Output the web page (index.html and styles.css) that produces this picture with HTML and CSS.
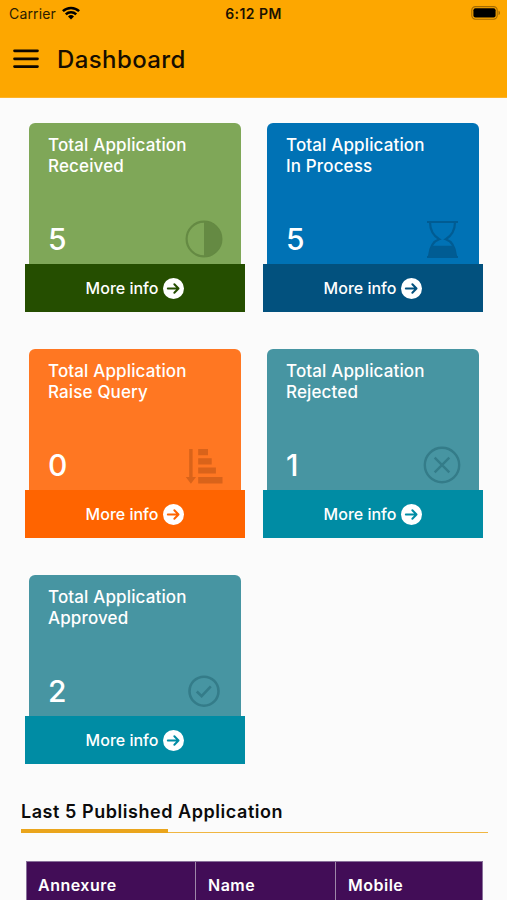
FILE: index.html
```html
<!DOCTYPE html>
<html lang="en">
<head>
<meta charset="utf-8">
<meta name="viewport" content="width=device-width, initial-scale=1">
<title>Dashboard</title>
<link rel="stylesheet" href="styles.css">
</head>
<body>
<svg class="defs" aria-hidden="true">
  <symbol id="go" viewBox="0 0 20 20">
    <circle cx="10" cy="10" r="10" fill="#fff"/>
    <path d="M4.6 10H14.8M10.8 6 14.8 10l-4 4" fill="none" stroke="currentColor" stroke-width="1.9" stroke-linecap="round" stroke-linejoin="round"/>
  </symbol>
</svg>
<header class="header">
  <div class="status">
    <div class="carrier"><span>Carrier</span>
      <svg class="wifi" viewBox="0 0 18 14"><g fill="none" stroke="#000" stroke-width="2.5"><path d="M.9 5.2a11.6 11.6 0 0 1 16.2 0"/><path d="M3.8 8.3a7.4 7.4 0 0 1 10.4 0"/></g><path d="M6 10.5a4.3 4.3 0 0 1 6 0L9 13.6z"/></svg>
    </div>
    <time class="time">6:12 PM</time>
    <svg class="battery" viewBox="0 0 30 14"><rect x=".8" y=".6" width="25.4" height="12.6" rx="3.6" fill="none" stroke="#a46b00" stroke-width="1.1"/><rect x="2.4" y="2.2" width="22.2" height="9.4" rx="2"/><path d="M27.5 4.7c2 .5 2 3.9 0 4.4z" fill="#a46b00"/></svg>
  </div>
  <div class="bar">
    <svg class="menu" viewBox="0 0 26 20"><path d="M1.5 1.8h23M1.5 9.8h23M1.5 17.6h23" stroke="#0d0700" stroke-width="2.7" stroke-linecap="round"/></svg>
    <h1>Dashboard</h1>
  </div>
</header>
<main>
  <section class="cards">
    <article class="card received">
      <div class="body"><h2>Total Application<br>Received</h2>
        <div class="row"><strong>5</strong>
          <svg class="icon" viewBox="0 0 38 38"><circle cx="19" cy="19" r="17.4" fill="none" stroke="currentColor" stroke-width="2.2"/><path d="M19 1.5a17.5 17.5 0 0 1 0 35z" fill="currentColor"/></svg>
        </div></div>
      <a class="more"><span>More info</span><svg><use href="#go"/></svg></a>
    </article>
    <article class="card process">
      <div class="body"><h2>Total Application<br>In Process</h2>
        <div class="row"><strong>5</strong>
          <svg class="icon" viewBox="0 0 38 38"><path d="M4 2h31M4 37h31" stroke="currentColor" stroke-width="2.2"/><path d="M7 2c0 9 4 14 9.2 17.3C11 21 7 26 6 36M32 2c0 9-4 14-9.2 17.3C28 21 32 26 33 36" fill="none" stroke="currentColor" stroke-width="2.2"/><path d="M8.3 25.8h22.4L33.5 37h-28z" fill="currentColor"/></svg>
        </div></div>
      <a class="more"><span>More info</span><svg><use href="#go"/></svg></a>
    </article>
    <article class="card query">
      <div class="body"><h2>Total Application<br>Raise Query</h2>
        <div class="row"><strong>0</strong>
          <svg class="icon" viewBox="0 0 38 38"><path d="M4.2 3h3.4v28H11l-5.1 6.8L.8 31h3.4zM13.2 3H23v6.2h-9.8zM13.2 12.2h13.5v6.2H13.2zM13.2 21.5h17.7v6H13.2zM13.2 31h24.3v6.4H13.2z" fill="currentColor"/></svg>
        </div></div>
      <a class="more"><span>More info</span><svg><use href="#go"/></svg></a>
    </article>
    <article class="card rejected">
      <div class="body"><h2>Total Application<br>Rejected</h2>
        <div class="row"><strong>1</strong>
          <svg class="icon" viewBox="0 0 38 38"><g fill="none" stroke="currentColor" stroke-width="2.4"><circle cx="19" cy="19" r="17.2"/><path d="m11.7 11.7 14.6 14.6M26.3 11.7 11.7 26.3"/></g></svg>
        </div></div>
      <a class="more"><span>More info</span><svg><use href="#go"/></svg></a>
    </article>
    <article class="card approved">
      <div class="body"><h2>Total Application<br>Approved</h2>
        <div class="row"><strong>2</strong>
          <svg class="icon" viewBox="0 0 38 38"><g fill="none" stroke="currentColor" stroke-width="2.6"><circle cx="19" cy="19.2" r="14.5"/><path d="m11.8 19.5 4.8 4.7 9.2-9.8"/></g></svg>
        </div></div>
      <a class="more"><span>More info</span><svg><use href="#go"/></svg></a>
    </article>
  </section>
  <section class="published">
    <h3>Last 5 Published Application</h3>
    <div class="rule"><div class="accent"></div></div>
    <div class="table"><div>Annexure</div><div>Name</div><div>Mobile</div></div>
  </section>
</main>
</body>
</html>
```
FILE: styles.css
```css
* { box-sizing: border-box; margin: 0; padding: 0; }
html, body { height: 900px; overflow: hidden; }
body { background: #fbfbfb; font-family: Inter, "Liberation Sans", sans-serif; color: #0b0b0b; }
svg { display: block; flex: none; }
.defs { width: 0; height: 0; float: left; }
.header { height: 98px; background: #fda700; border-bottom: 1px solid #fdb32a; }
.status { height: 26px; padding: 0 6px 0 9px; display: grid; grid-template-columns: 1fr auto 1fr; align-items: center; }
.carrier { display: flex; align-items: center; gap: 6px; font-size: 14px; letter-spacing: .15px; color: #2b1c00; }
.wifi { width: 18px; height: 14px; }
.time { font-size: 14px; font-weight: 600; letter-spacing: .45px; margin-right: 3px; color: #1c1200; }
.battery { width: 30px; height: 14px; justify-self: end; }
.bar { display: flex; align-items: center; gap: 18px; height: 66px; padding-left: 13px; }
.menu { width: 26px; height: 20px; }
h1 { font-size: 24px; font-weight: 450; letter-spacing: .4px; color: #170e00; }
.cards { display: grid; grid-template-columns: 220px 220px; column-gap: 18px; row-gap: 37px; padding: 25px 25px 0; }
.card { height: 189px; }
.body { height: 141px; margin: 0 4px; padding: 12px 18px 6px 19px; border-radius: 6px 6px 0 0; color: #fff; display: flex; flex-direction: column; justify-content: space-between; }
h2 { font-size: 17px; line-height: 21px; font-weight: 500; letter-spacing: .14px; }
.row { display: flex; align-items: center; justify-content: space-between; height: 38px; }
strong { font-size: 30px; line-height: 38px; font-weight: 500; }
.icon { width: 38px; height: 38px; }
.more { height: 48px; display: flex; align-items: center; justify-content: center; gap: 5px; font-size: 16px; font-weight: 500; }
.more span { color: #fff; }
.more svg { width: 21px; height: 21px; }
.received .body { background: #7fa758; }
.received .icon { color: #658a43; }
.received .more { background: #254e00; color: #254e00; }
.process .body { background: #0072b5; }
.process .icon { color: #005c93; }
.process .more { background: #02517e; color: #02517e; }
.query .body { background: #ff7722; }
.query .icon { color: #d9631a; }
.query .more { background: #ff6400; color: #ff6400; }
.rejected .body, .approved .body { background: #4795a2; }
.rejected .icon, .approved .icon { color: #347c89; }
.rejected .more, .approved .more { background: #008ca4; color: #008ca4; }
.published { padding: 36px 19px 0 21px; }
h3 { font-size: 18px; line-height: 24px; font-weight: 600; letter-spacing: .55px; }
.rule { height: 4px; margin-top: 5px; border-bottom: 1px solid #f0b642; }
.accent { width: 147px; height: 4px; background: #eaa51c; }
.table { display: grid; grid-template-columns: 169px 140px 1fr; width: 457px; height: 60px; margin: 28px 0 0 5px; border: 1px solid #88709a; background: #420d57; color: #fff; font-size: 16px; font-weight: 600; letter-spacing: .5px; line-height: 46px; }
.table div { padding-left: 12px; border-right: 1px solid #9d87a8; }
.table div:first-child { padding-left: 11px; }
.table div:last-child { border-right: 0; }
```
